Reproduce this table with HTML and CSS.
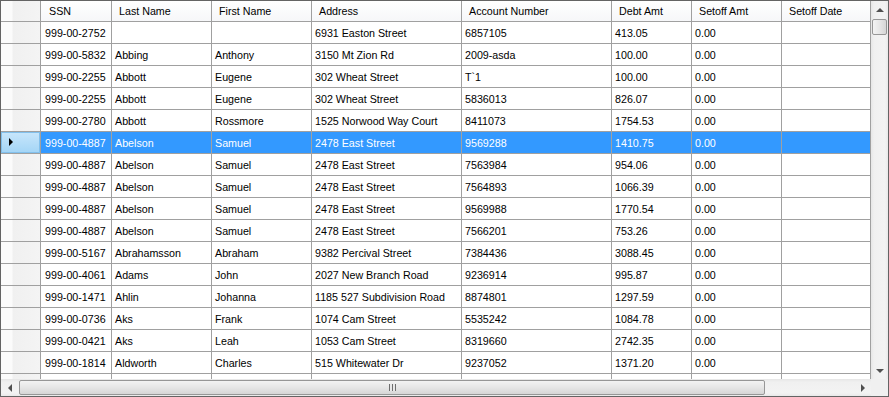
FILE: index.html
```html
<!DOCTYPE html>
<html lang="en">
<head>
    <meta charset="UTF-8">
    <title>Setoff Grid</title>
    <link rel="stylesheet" href="styles.css">
</head>
<body>
    <div class="grid">
        <div class="viewport">
            <div class="row head">
                <div class="rh corner-cell"></div>
                <div class="hc">SSN</div>
                <div class="hc">Last Name</div>
                <div class="hc">First Name</div>
                <div class="hc">Address</div>
                <div class="hc">Account Number</div>
                <div class="hc">Debt Amt</div>
                <div class="hc">Setoff Amt</div>
                <div class="hc">Setoff Date</div>
            </div>
            <div class="row"><div class="rh"></div><div class="c">999-00-2752</div><div class="c"></div><div class="c"></div><div class="c">6931 Easton Street</div><div class="c">6857105</div><div class="c">413.05</div><div class="c">0.00</div><div class="c"></div></div>
            <div class="row"><div class="rh"></div><div class="c">999-00-5832</div><div class="c">Abbing</div><div class="c">Anthony</div><div class="c">3150 Mt Zion Rd</div><div class="c">2009-asda</div><div class="c">100.00</div><div class="c">0.00</div><div class="c"></div></div>
            <div class="row"><div class="rh"></div><div class="c">999-00-2255</div><div class="c">Abbott</div><div class="c">Eugene</div><div class="c">302 Wheat Street</div><div class="c">T`1</div><div class="c">100.00</div><div class="c">0.00</div><div class="c"></div></div>
            <div class="row"><div class="rh"></div><div class="c">999-00-2255</div><div class="c">Abbott</div><div class="c">Eugene</div><div class="c">302 Wheat Street</div><div class="c">5836013</div><div class="c">826.07</div><div class="c">0.00</div><div class="c"></div></div>
            <div class="row"><div class="rh"></div><div class="c">999-00-2780</div><div class="c">Abbott</div><div class="c">Rossmore</div><div class="c">1525 Norwood Way Court</div><div class="c">8411073</div><div class="c">1754.53</div><div class="c">0.00</div><div class="c"></div></div>
            <div class="row selected"><div class="rh"><span class="arrow"></span></div><div class="c">999-00-4887</div><div class="c">Abelson</div><div class="c">Samuel</div><div class="c">2478 East Street</div><div class="c">9569288</div><div class="c">1410.75</div><div class="c">0.00</div><div class="c"></div></div>
            <div class="row"><div class="rh"></div><div class="c">999-00-4887</div><div class="c">Abelson</div><div class="c">Samuel</div><div class="c">2478 East Street</div><div class="c">7563984</div><div class="c">954.06</div><div class="c">0.00</div><div class="c"></div></div>
            <div class="row"><div class="rh"></div><div class="c">999-00-4887</div><div class="c">Abelson</div><div class="c">Samuel</div><div class="c">2478 East Street</div><div class="c">7564893</div><div class="c">1066.39</div><div class="c">0.00</div><div class="c"></div></div>
            <div class="row"><div class="rh"></div><div class="c">999-00-4887</div><div class="c">Abelson</div><div class="c">Samuel</div><div class="c">2478 East Street</div><div class="c">9569988</div><div class="c">1770.54</div><div class="c">0.00</div><div class="c"></div></div>
            <div class="row"><div class="rh"></div><div class="c">999-00-4887</div><div class="c">Abelson</div><div class="c">Samuel</div><div class="c">2478 East Street</div><div class="c">7566201</div><div class="c">753.26</div><div class="c">0.00</div><div class="c"></div></div>
            <div class="row"><div class="rh"></div><div class="c">999-00-5167</div><div class="c">Abrahamsson</div><div class="c">Abraham</div><div class="c">9382 Percival Street</div><div class="c">7384436</div><div class="c">3088.45</div><div class="c">0.00</div><div class="c"></div></div>
            <div class="row"><div class="rh"></div><div class="c">999-00-4061</div><div class="c">Adams</div><div class="c">John</div><div class="c">2027 New Branch Road</div><div class="c">9236914</div><div class="c">995.87</div><div class="c">0.00</div><div class="c"></div></div>
            <div class="row"><div class="rh"></div><div class="c">999-00-1471</div><div class="c">Ahlin</div><div class="c">Johanna</div><div class="c">1185 527 Subdivision Road</div><div class="c">8874801</div><div class="c">1297.59</div><div class="c">0.00</div><div class="c"></div></div>
            <div class="row"><div class="rh"></div><div class="c">999-00-0736</div><div class="c">Aks</div><div class="c">Frank</div><div class="c">1074 Cam Street</div><div class="c">5535242</div><div class="c">1084.78</div><div class="c">0.00</div><div class="c"></div></div>
            <div class="row"><div class="rh"></div><div class="c">999-00-0421</div><div class="c">Aks</div><div class="c">Leah</div><div class="c">1053 Cam Street</div><div class="c">8319660</div><div class="c">2742.35</div><div class="c">0.00</div><div class="c"></div></div>
            <div class="row"><div class="rh"></div><div class="c">999-00-1814</div><div class="c">Aldworth</div><div class="c">Charles</div><div class="c">515 Whitewater Dr</div><div class="c">9237052</div><div class="c">1371.20</div><div class="c">0.00</div><div class="c"></div></div>
            <div class="row"><div class="rh"></div><div class="c"></div><div class="c"></div><div class="c"></div><div class="c"></div><div class="c"></div><div class="c"></div><div class="c"></div><div class="c"></div></div>
        </div>
        <div class="vscroll">
            <div class="sbtn"><span class="tri up"></span></div>
            <div class="vtrack"><div class="vthumb"></div></div>
            <div class="sbtn"><span class="tri down"></span></div>
        </div>
        <div class="hscroll">
            <div class="sbtn"><span class="tri left"></span></div>
            <div class="htrack"><div class="hthumb"><span class="grip"></span></div></div>
            <div class="sbtn"><span class="tri right"></span></div>
        </div>
        <div class="corner"></div>
    </div>
</body>
</html>
```

FILE: styles.css
```css
* {
    box-sizing: border-box;
}
body {
    margin: 0;
    font-family: 'Liberation Sans', Arial, sans-serif;
    font-size: 10.7px;
    color: #000;
    background: #fff;
}
.grid {
    width: 889px;
    height: 397px;
    border: 1px solid #646464;
    display: grid;
    grid-template-columns: 870px 17px;
    grid-template-rows: 378px 17px;
}
.viewport {
    overflow: hidden;
    background: #fff;
}
.row {
    display: grid;
    grid-template-columns: 40px 71px 100px 100px 150px 150px 80px 90px 89px;
    height: 22px;
}
.row > div {
    border-right: 1px solid #a0a0a0;
    border-bottom: 1px solid #a0a0a0;
    padding-top: 1px;
    line-height: 20px;
    white-space: nowrap;
    overflow: hidden;
}
.head {
    height: 21px;
}
.head > div {
    line-height: 20px;
    padding-top: 0;
}
.hc {
    padding-left: 7px;
    background: linear-gradient(#ffffff, #f6f7f9);
}
.rh + .hc {
    padding-left: 8px;
}
.corner-cell {
    background: linear-gradient(#f8f9fb, #f1f2f5);
}
.c {
    padding-left: 4px;
}
.c + .c {
    padding-left: 3px;
}
.rh {
    background: linear-gradient(to right, #fbfbfb 0, #fbfbfb 11px, #f0f0f0 12px, #f4f4f4);
    position: relative;
}
.selected .c {
    background: #3399ff;
    color: #fff;
}
.selected .rh {
    background: linear-gradient(#c8e6fb, #a3d5f6);
    box-shadow: inset 0 0 0 1px #82c0ec;
}
.arrow {
    position: absolute;
    left: 8px;
    top: 6px;
    width: 0;
    height: 0;
    border-top: 4px solid transparent;
    border-bottom: 4px solid transparent;
    border-left: 4px solid #000;
}
.vscroll {
    display: flex;
    flex-direction: column;
    background: linear-gradient(to right, #e6e6e6, #f0f0f0 3px, #f3f3f3 14px, #e9e9e9);
}
.hscroll {
    display: flex;
    background: linear-gradient(#e6e6e6, #f0f0f0 3px, #f3f3f3 14px, #e9e9e9);
}
.sbtn {
    width: 17px;
    height: 17px;
    flex: none;
    display: flex;
    align-items: center;
    justify-content: center;
}
.tri {
    width: 0;
    height: 0;
}
.tri.up {
    border-left: 4px solid transparent;
    border-right: 4px solid transparent;
    border-bottom: 4px solid #505050;
}
.tri.down {
    border-left: 4px solid transparent;
    border-right: 4px solid transparent;
    border-top: 4px solid #505050;
}
.tri.left {
    border-top: 4px solid transparent;
    border-bottom: 4px solid transparent;
    border-right: 4px solid #505050;
}
.tri.right {
    border-top: 4px solid transparent;
    border-bottom: 4px solid transparent;
    border-left: 4px solid #505050;
}
.vtrack {
    flex: 1;
    padding: 1px 1px 0 1px;
}
.vthumb {
    height: 16px;
    border: 1px solid #979797;
    border-radius: 2px;
    background: linear-gradient(to right, #f3f3f3, #e6e6e6 50%, #d6d6d6);
}
.htrack {
    flex: 1;
    padding: 1px 0 1px 1px;
}
.hthumb {
    width: 746px;
    height: 15px;
    border: 1px solid #979797;
    border-radius: 2px;
    background: linear-gradient(#f3f3f3, #e6e6e6 50%, #d6d6d6);
    display: flex;
    align-items: center;
    justify-content: center;
}
.grip {
    width: 7px;
    height: 7px;
    background: repeating-linear-gradient(to right, #6e6e6e 0, #6e6e6e 1px, #e8e8e8 1px, #e8e8e8 3px);
}
.corner {
    background: #f0f0f0;
}
```
